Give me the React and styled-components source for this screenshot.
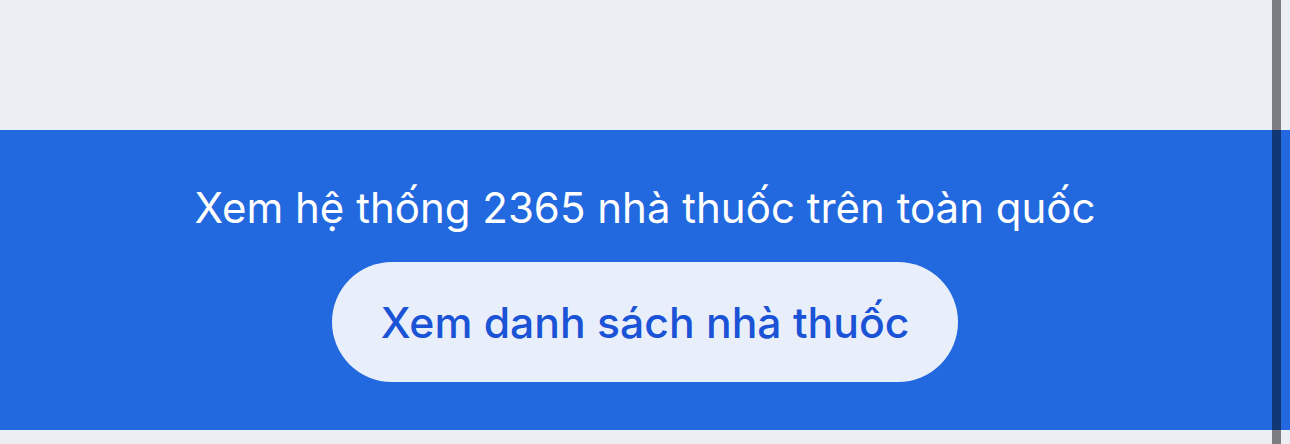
import React from 'react';
import styled, { createGlobalStyle } from 'styled-components';

const GlobalStyle = createGlobalStyle`
  html, body {
    margin: 0;
    padding: 0;
    background: #ebeff3;
    font-family: Inter, "Noto Sans", sans-serif;
    overflow: hidden;
  }
`;

const Page = styled.div`
  position: relative;
  height: 444px;
  padding-top: 130px;
  box-sizing: border-box;
`;

const Banner = styled.section`
  height: 300px;
  padding: 48px 0;
  box-sizing: border-box;
  background: #2268de;
  display: flex;
  flex-direction: column;
  align-items: center;
`;

const Title = styled.p`
  margin: 0;
  color: #ffffff;
  font-size: 42px;
  line-height: 60px;
  font-weight: 400;
`;

const ListButton = styled.button`
  margin-top: 24px;
  height: 120px;
  width: 626px;
  padding: 0;
  border: none;
  border-radius: 60px;
  background: #e9effa;
  color: #1a53d6;
  font-family: inherit;
  font-size: 42.7px;
  font-weight: 500;
  cursor: pointer;
`;

const ScrollThumb = styled.div`
  position: absolute;
  top: 0;
  bottom: 0;
  left: 1272px;
  width: 9px;
  background: rgba(0, 0, 0, 0.48);
`;

const App = () => (
  <>
    <GlobalStyle />
    <Page>
      <Banner>
        <Title>Xem hệ thống 2365 nhà thuốc trên toàn quốc</Title>
        <ListButton>Xem danh sách nhà thuốc</ListButton>
      </Banner>
      <ScrollThumb />
    </Page>
  </>
);

export default App;
